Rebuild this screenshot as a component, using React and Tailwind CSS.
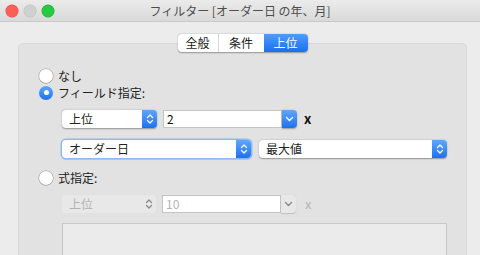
import React from 'react';

const FONT = { fontFamily: '"Noto Sans CJK JP", "Noto Sans", sans-serif' };

// small up/down arrows used on popup buttons
const Stepper = ({ disabled }) => (
    <svg width="8" height="12" viewBox="0 0 8 12" fill="none">
        <path d="M1.5 4.5 L4 2 L6.5 4.5" stroke={disabled ? '#8a8a8a' : '#fff'} strokeWidth="1.3" strokeLinecap="round" strokeLinejoin="round" />
        <path d="M1.5 7.5 L4 10 L6.5 7.5" stroke={disabled ? '#8a8a8a' : '#fff'} strokeWidth="1.3" strokeLinecap="round" strokeLinejoin="round" />
    </svg>
);

const Chevron = ({ disabled }) => (
    <svg width="9" height="6" viewBox="0 0 9 6" fill="none">
        <path d="M1.5 1.5 L4.5 4.5 L7.5 1.5" stroke={disabled ? '#8a8a8a' : '#fff'} strokeWidth="1.4" strokeLinecap="round" strokeLinejoin="round" />
    </svg>
);

const Popup = ({ label, width, focused, disabled }) => (
    <div
        className={`flex h-[18px] items-stretch rounded-[4px] ${disabled ? 'bg-[#e8e8e8]' : 'bg-white shadow-[0_0.5px_1.5px_rgba(0,0,0,0.35)]'} ${focused ? 'ring-[1.5px] ring-[#8fb8f0]' : ''}`}
        style={{ width }}
    >
        <span className={`flex-1 pl-[7px] text-[12px] leading-[18px] ${disabled ? 'text-[#b4b4b4]' : 'text-[#222]'}`}>{label}</span>
        <span
            className={`flex w-[15px] items-center justify-center rounded-r-[4px] ${disabled ? '' : 'bg-gradient-to-b from-[#5ea6fb] to-[#1b71ee]'}`}
        >
            <Stepper disabled={disabled} />
        </span>
    </div>
);

const Combo = ({ value, disabled }) => (
    <div className="flex h-[18px] w-[134px] items-stretch">
        <div className={`flex-1 border border-[#c4c4c4] pl-[3px] text-[12px] leading-[16px] ${disabled ? 'bg-white text-[#b4b4b4]' : 'bg-white text-[#111]'}`}>
            {value}
        </div>
        <span
            className={`flex w-[15px] items-center justify-center rounded-r-[4px] ${disabled ? 'bg-[#e8e8e8] shadow-[0_0.5px_1px_rgba(0,0,0,0.15)]' : 'bg-gradient-to-b from-[#5ea6fb] to-[#1b71ee] shadow-[0_0.5px_1.5px_rgba(0,0,0,0.3)]'}`}
        >
            <Chevron disabled={disabled} />
        </span>
    </div>
);

const Radio = ({ label, checked }) => (
    <div className="flex h-[17px] items-center gap-[5px]">
        {checked ? (
            <span className="flex h-[14px] w-[14px] items-center justify-center rounded-full bg-gradient-to-b from-[#5ea6fb] to-[#1b71ee]">
                <span className="h-[5px] w-[5px] rounded-full bg-white" />
            </span>
        ) : (
            <span className="h-[14px] w-[14px] rounded-full bg-white shadow-[0_0_0_0.5px_rgba(0,0,0,0.3),0_0.5px_1px_rgba(0,0,0,0.2)]" />
        )}
        <span className="text-[12px] leading-[16px] text-[#222]">{label}</span>
    </div>
);

const App = () => {
    const tabs = ['全般', '条件', '上位'];

    return (
        <div className="h-[255px] w-[480px] overflow-hidden bg-[#ececec]" style={FONT}>
            {/* title bar */}
            <div className="relative flex h-[22px] items-center border-b border-[#c9c9c9] bg-gradient-to-b from-[#ebebeb] to-[#d9d9d9]">
                <div className="flex gap-[6px] pl-[6px]">
                    <span className="h-[12px] w-[12px] rounded-full bg-[#fc5f57] shadow-[0_0_0_0.5px_#e2463f]" />
                    <span className="h-[12px] w-[12px] rounded-full bg-[#d0d0d0] shadow-[0_0_0_0.5px_#bdbdbd]" />
                    <span className="h-[12px] w-[12px] rounded-full bg-[#28c840] shadow-[0_0_0_0.5px_#1dad2b]" />
                </div>
                <div className="absolute inset-0 flex items-center justify-center text-[12px] leading-[22px] text-[#4d4d4d]">
                    フィルター [オーダー日 の年、月]
                </div>
            </div>

            <div className="pl-[18px] pr-[13px] pt-[12px]">
                {/* segmented tabs */}
                <div className="relative z-10 flex justify-center">
                    <div className="flex h-[18px] rounded-[4px] bg-white text-[12px] leading-[18px] shadow-[0_0.5px_1.5px_rgba(0,0,0,0.35)]">
                        {tabs.map((t, i) => (
                            <div
                                key={t}
                                className={`flex items-center justify-center ${i === 0 ? 'w-[41px] border-r border-[#d6d6d6]' : ''} ${i === 1 ? 'w-[45px]' : ''} ${i === 2 ? 'w-[44px] rounded-r-[4px] bg-gradient-to-b from-[#4f9bfb] to-[#1a6ff0] text-white' : 'text-[#222]'}`}
                            >
                                {t}
                            </div>
                        ))}
                    </div>
                </div>

                {/* panel */}
                <div className="-mt-[9px] h-[240px] rounded-[5px] border border-[#d8d8d8] bg-[#e2e2e2] pl-[20px] pt-[23px]">
                    <Radio label="なし" />
                    <Radio label="フィールド指定:" checked />

                    <div className="ml-[23px] mt-[9px] flex items-center gap-[6px]">
                        <Popup label="上位" width={95} />
                        <Combo value="2" />
                        <span className="ml-[1px] text-[13px] font-bold leading-[18px] text-[#111]">x</span>
                    </div>

                    <div className="ml-[23px] mt-[12px] flex items-center gap-[8px]">
                        <Popup label="オーダー日" width={189} focused />
                        <Popup label="最大値" width={188} />
                    </div>

                    <div className="mt-[11px]">
                        <Radio label="式指定:" />
                    </div>

                    <div className="ml-[23px] mt-[9px] flex items-center gap-[6px]">
                        <Popup label="上位" width={94} disabled />
                        <Combo value="10" disabled />
                        <span className="ml-[3px] text-[13px] leading-[18px] text-[#b4b4b4]">x</span>
                    </div>

                    <div className="ml-[23px] mt-[10px] h-[60px] w-[385px] border border-[#c8c8c8] bg-[#ebebeb]" />
                </div>
            </div>
        </div>
    );
};

export default App;
